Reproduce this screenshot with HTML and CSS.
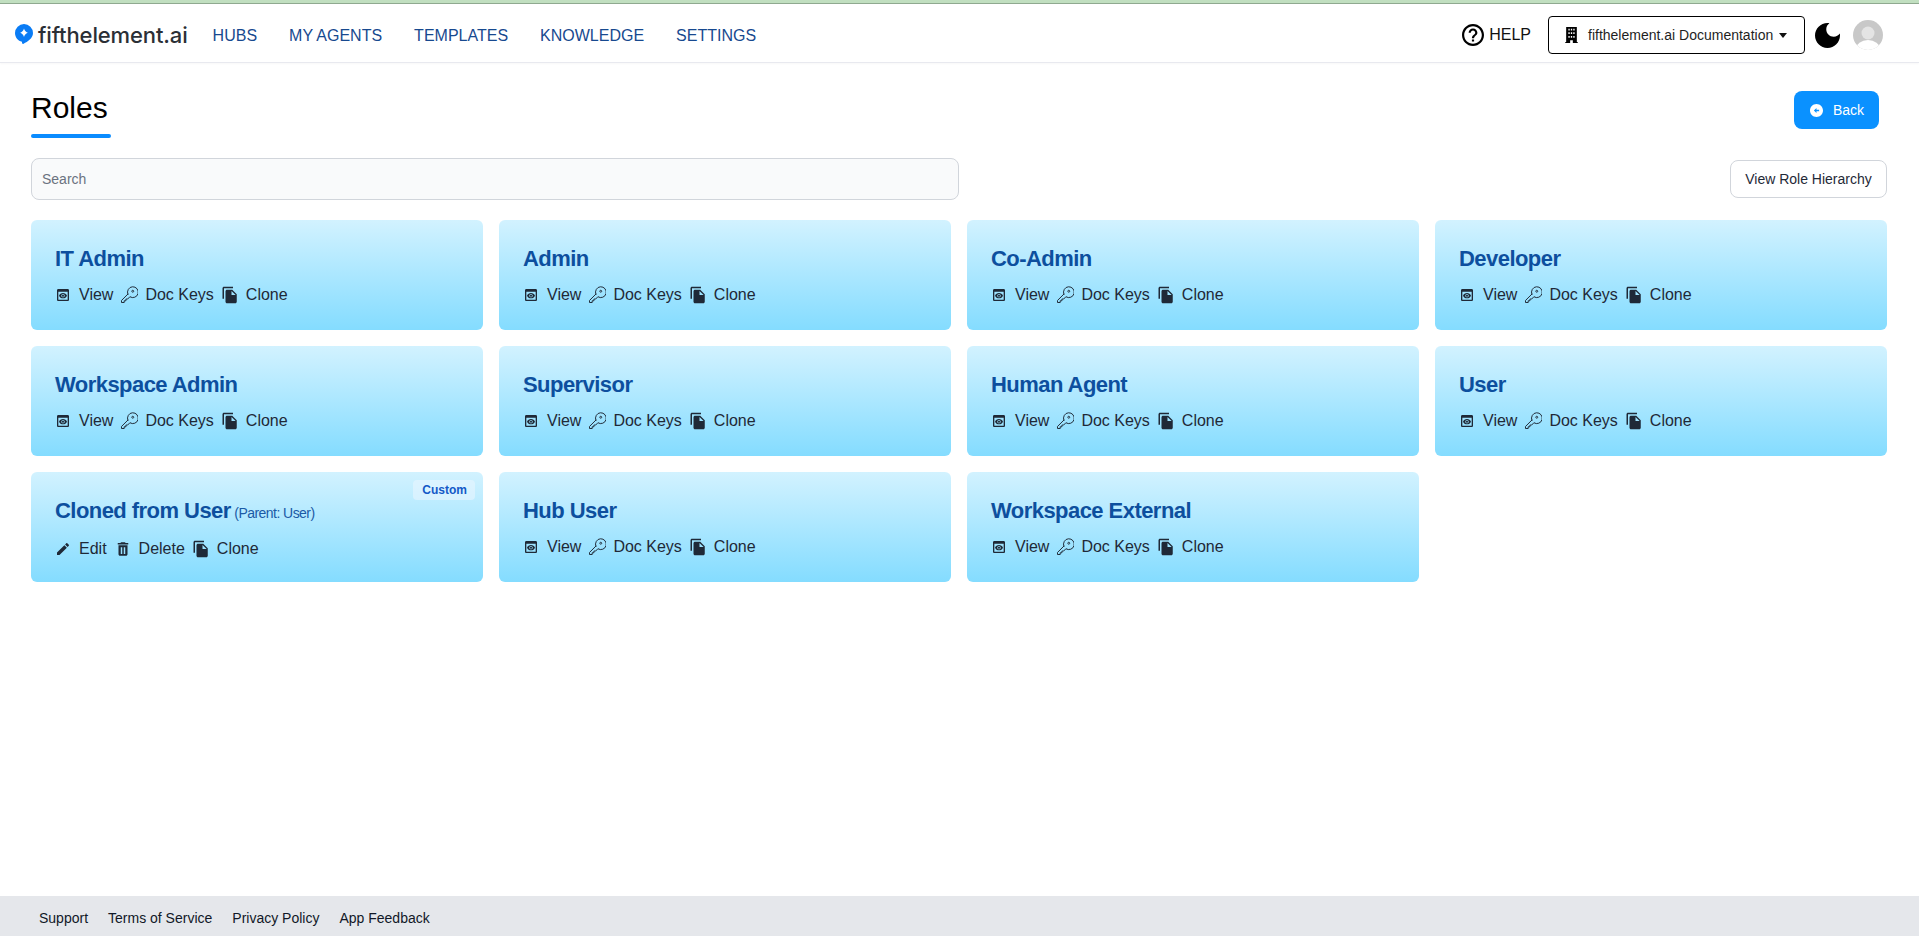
FILE: index.html
```html
<!DOCTYPE html>
<html lang="en">
<head>
<meta charset="utf-8">
<title>Roles</title>
<link rel="stylesheet" href="styles.css">
</head>
<body>
<svg class="sprite" aria-hidden="true">
  <symbol id="i-view" viewBox="0 0 24 24"><path d="M19 3H5c-1.11 0-2 .9-2 2v14c0 1.1.89 2 2 2h14c1.1 0 2-.9 2-2V5c0-1.1-.89-2-2-2zm0 16H5V7h14v12zm-5.5-6c0 .83-.67 1.5-1.5 1.5s-1.5-.67-1.5-1.5.67-1.5 1.5-1.5 1.5.67 1.5 1.5zM12 9c-2.73 0-5.06 1.66-6 4 .94 2.34 3.27 4 6 4s5.06-1.66 6-4c-.94-2.34-3.27-4-6-4zm0 6.5c-1.38 0-2.5-1.12-2.5-2.5s1.12-2.5 2.5-2.5 2.5 1.12 2.5 2.5-1.12 2.5-2.5 2.5z"/></symbol>
  <symbol id="i-key" viewBox="0 0 24 24"><path fill="none" stroke="currentColor" stroke-width="1.300" stroke-linejoin="round" stroke-linecap="round" d="M10.400 10.900 2 19.300V22h3.600v-2.300h2.300v-2.300h2.300l3-3.100a7.200 7.200 0 1 0-2.800-3.400z"/><circle cx="17" cy="7" r="1.300" fill="none" stroke="currentColor" stroke-width="1.200"/></symbol>
  <symbol id="i-copy" viewBox="0 0 24 24"><path d="M16 1H4c-1.1 0-2 .9-2 2v14h2V3h12V1zm-1 4l6 6v10c0 1.1-.9 2-2 2H7.99C6.89 23 6 22.1 6 21l.01-14c0-1.1.89-2 1.99-2h7zm-1 7h5.500L14 6.500V12z"/></symbol>
  <symbol id="i-edit" viewBox="0 0 24 24"><path d="M3 17.250V21h3.750L17.810 9.940l-3.750-3.750L3 17.250zM20.710 7.040c.39-.39.39-1.020 0-1.410l-2.340-2.340c-.39-.39-1.020-.39-1.410 0l-1.830 1.830 3.750 3.750 1.830-1.830z"/></symbol>
  <symbol id="i-trash" viewBox="0 0 24 24"><path fill-rule="evenodd" d="M6 19c0 1.100.9 2 2 2h8c1.100 0 2-.9 2-2V7H6v12zM9 9.500h2v9H9zM13 9.500h2v9h-2zM19 4h-3.500l-1-1h-5l-1 1H5v2h14V4z"/></symbol>
</svg>

<div class="topline"></div>
<header class="topbar">
  <a class="brand" href="#">
    <svg class="brand-mark" viewBox="0 0 18 20"><path fill="#0a7cf5" d="M9 0a9 9 0 0 0-9 9c0 4.300 3 7.900 7 8.800v1.300c0 .8 1 1.100 1.600.6C12.700 17.600 18 14.300 18 9a9 9 0 0 0-9-9z"/><path fill="#fff" d="M9 4.500c.7 2.300 1.500 3.200 3.800 4.300-2.300 1-3.100 2-3.800 4.300-.7-2.300-1.500-3.300-3.800-4.300C7.500 7.700 8.300 6.800 9 4.500z"/></svg>
    <span class="brand-name">fifthelement.ai</span>
  </a>
  <nav class="mainnav">
    <a href="#">HUBS</a>
    <a href="#">MY AGENTS</a>
    <a href="#">TEMPLATES</a>
    <a href="#">KNOWLEDGE</a>
    <a href="#">SETTINGS</a>
  </nav>
  <div class="topbar-right">
    <a class="help" href="#">
      <svg class="help-icon" viewBox="2 2 20 20"><path d="M11 18h2v-2h-2v2zm1-16C6.480 2 2 6.480 2 12s4.480 10 10 10 10-4.480 10-10S17.520 2 12 2zm0 18c-4.410 0-8-3.590-8-8s3.590-8 8-8 8 3.590 8 8-3.590 8-8 8zm0-14c-2.210 0-4 1.790-4 4h2c0-1.100.9-2 2-2s2 .9 2 2c0 2-3 1.750-3 5h2c0-2.250 3-2.500 3-5 0-2.210-1.790-4-4-4z"/></svg>
      <span>HELP</span>
    </a>
    <button class="org" type="button">
      <svg class="org-icon" viewBox="0 0 14 18"><path fill-rule="evenodd" d="M1 0h12v17h1v1H8.500v-3h-3v3H0v-1h1zM3.500 2v2H5V2zM6.250 2v2h1.500V2zM9 2v2h1.500V2zM3.500 6v2H5V6zM6.250 6v2h1.500V6zM9 6v2h1.500V6zM3.500 10v2H5v-2zM6.250 10v2h1.500v-2zM9 10v2h1.500v-2z"/></svg>
      <span>fifthelement.ai Documentation</span>
      <i class="caret"></i>
    </button>
    <svg class="moon" viewBox="3 3 18 18"><path d="M12 3c-4.970 0-9 4.030-9 9s4.030 9 9 9 9-4.030 9-9c0-.46-.04-.92-.1-1.360-.98 1.370-2.580 2.260-4.400 2.260-2.980 0-5.400-2.420-5.400-5.400 0-1.810.89-3.420 2.260-4.400-.44-.06-.9-.1-1.360-.1z"/></svg>
    <svg class="avatar" viewBox="0 0 30 30"><defs><clipPath id="avatar-clip"><circle cx="15" cy="15" r="15"/></clipPath></defs><g clip-path="url(#avatar-clip)"><rect width="30" height="30" fill="#c8c8c8"/><circle cx="15" cy="13" r="6.500" fill="#e4e4e4"/><ellipse cx="15" cy="29" rx="12" ry="9" fill="#fff"/></g></svg>
  </div>
</header>

<main class="page">
  <div class="page-head">
    <div class="title-block">
      <h1>Roles</h1>
      <div class="title-rule"></div>
    </div>
    <button class="btn-back" type="button">
      <svg viewBox="2 2 20 20"><path d="M2 12c0 5.520 4.480 10 10 10s10-4.480 10-10S17.520 2 12 2 2 6.480 2 12zm10-1h4v2h-4v3l-4-4 4-4v3z"/></svg>
      <span>Back</span>
    </button>
  </div>

  <div class="toolbar">
    <input class="search" type="text" placeholder="Search">
    <button class="btn-outline" type="button">View Role Hierarchy</button>
  </div>

  <section class="role-grid">
    <article class="role"><h2>IT Admin</h2><div class="actions"><a href="#"><svg><use href="#i-view"/></svg>View</a><a href="#"><svg class="key"><use href="#i-key"/></svg>Doc Keys</a><a href="#"><svg class="copy"><use href="#i-copy"/></svg>Clone</a></div></article>
    <article class="role"><h2>Admin</h2><div class="actions"><a href="#"><svg><use href="#i-view"/></svg>View</a><a href="#"><svg class="key"><use href="#i-key"/></svg>Doc Keys</a><a href="#"><svg class="copy"><use href="#i-copy"/></svg>Clone</a></div></article>
    <article class="role"><h2>Co-Admin</h2><div class="actions"><a href="#"><svg><use href="#i-view"/></svg>View</a><a href="#"><svg class="key"><use href="#i-key"/></svg>Doc Keys</a><a href="#"><svg class="copy"><use href="#i-copy"/></svg>Clone</a></div></article>
    <article class="role"><h2>Developer</h2><div class="actions"><a href="#"><svg><use href="#i-view"/></svg>View</a><a href="#"><svg class="key"><use href="#i-key"/></svg>Doc Keys</a><a href="#"><svg class="copy"><use href="#i-copy"/></svg>Clone</a></div></article>
    <article class="role"><h2>Workspace Admin</h2><div class="actions"><a href="#"><svg><use href="#i-view"/></svg>View</a><a href="#"><svg class="key"><use href="#i-key"/></svg>Doc Keys</a><a href="#"><svg class="copy"><use href="#i-copy"/></svg>Clone</a></div></article>
    <article class="role"><h2>Supervisor</h2><div class="actions"><a href="#"><svg><use href="#i-view"/></svg>View</a><a href="#"><svg class="key"><use href="#i-key"/></svg>Doc Keys</a><a href="#"><svg class="copy"><use href="#i-copy"/></svg>Clone</a></div></article>
    <article class="role"><h2>Human Agent</h2><div class="actions"><a href="#"><svg><use href="#i-view"/></svg>View</a><a href="#"><svg class="key"><use href="#i-key"/></svg>Doc Keys</a><a href="#"><svg class="copy"><use href="#i-copy"/></svg>Clone</a></div></article>
    <article class="role"><h2>User</h2><div class="actions"><a href="#"><svg><use href="#i-view"/></svg>View</a><a href="#"><svg class="key"><use href="#i-key"/></svg>Doc Keys</a><a href="#"><svg class="copy"><use href="#i-copy"/></svg>Clone</a></div></article>
    <article class="role"><span class="badge">Custom</span><h2>Cloned from User <small>(Parent: User)</small></h2><div class="actions"><a href="#"><svg><use href="#i-edit"/></svg>Edit</a><a href="#"><svg class="trash"><use href="#i-trash"/></svg>Delete</a><a href="#"><svg class="copy"><use href="#i-copy"/></svg>Clone</a></div></article>
    <article class="role"><h2>Hub User</h2><div class="actions"><a href="#"><svg><use href="#i-view"/></svg>View</a><a href="#"><svg class="key"><use href="#i-key"/></svg>Doc Keys</a><a href="#"><svg class="copy"><use href="#i-copy"/></svg>Clone</a></div></article>
    <article class="role"><h2>Workspace External</h2><div class="actions"><a href="#"><svg><use href="#i-view"/></svg>View</a><a href="#"><svg class="key"><use href="#i-key"/></svg>Doc Keys</a><a href="#"><svg class="copy"><use href="#i-copy"/></svg>Clone</a></div></article>
  </section>
</main>

<footer class="footer">
  <a href="#">Support</a>
  <a href="#">Terms of Service</a>
  <a href="#">Privacy Policy</a>
  <a href="#">App Feedback</a>
</footer>
</body>
</html>
```

FILE: styles.css
```css
* { box-sizing: border-box; }
html, body { height: 100%; }
body {
  margin: 0;
  display: flex;
  flex-direction: column;
  min-height: 100vh;
  overflow: hidden;
  background: #fff;
  color: #1f2937;
  font-family: "Liberation Sans", Arial, sans-serif;
}
a { color: inherit; text-decoration: none; }
button { font-family: inherit; cursor: pointer; }
.sprite { display: none; }

.topline { height: 4px; flex: none; background: #c1dfc0; border-bottom: 1px solid #8fa98f; }

.topbar {
  flex: none;
  height: 59px;
  display: flex;
  align-items: center;
  padding: 4px 36px 0 15px;
  background: #fff;
  border-bottom: 1px solid #e8e9ef;
  box-shadow: 0 1px 2px rgba(0, 0, 0, .03);
}
.brand { display: flex; align-items: center; gap: 5px; }
.brand-mark { width: 18px; height: 20px; margin-bottom: 2px; }
.brand-name { font-family: Inter, sans-serif; font-size: 22px; font-weight: 500; letter-spacing: -.13px; color: #2b2f36; }
.mainnav { display: flex; gap: 32px; margin-left: 25px; padding-top: 2px; font-size: 16px; color: #17498f; }
.topbar-right { margin-left: auto; display: flex; align-items: center; }
.help { display: flex; align-items: center; gap: 5px; font-size: 16px; color: #111; margin-right: 17px; }
.help-icon { width: 22px; height: 22px; }
.org {
  width: 257px;
  height: 38px;
  display: flex;
  align-items: center;
  padding: 0 14px 0 16px;
  background: #fff;
  color: #1f1f1f;
  border: 1px solid #000;
  border-radius: 4px;
  font-size: 14px;
}
.org-icon { width: 13px; height: 16px; margin-right: 10px; }
.caret { margin-left: 6px; border: 4.500px solid transparent; border-top: 5px solid #111; border-bottom: 0; }
.moon { width: 25px; height: 25px; margin-left: 10px; }
.avatar { width: 30px; height: 30px; margin-left: 13px; }

.page { flex: 1; padding: 25px 32px 0 31px; }
.page-head { display: flex; justify-content: space-between; align-items: flex-start; padding-right: 8px; }
.title-block { width: 80px; }
h1 { margin: 0; font-size: 30px; font-weight: 400; line-height: 40px; color: #000; }
.title-rule { height: 4px; margin-top: 6px; background: #0a8cff; border-radius: 2px; }
.btn-back {
  display: flex;
  align-items: center;
  gap: 10px;
  height: 38px;
  margin-top: 3px;
  padding: 0 15px 0 16px;
  background: #0a91ff;
  color: #fff;
  border: 0;
  border-radius: 8px;
  font-size: 14px;
}
.btn-back svg { width: 13px; height: 13px; fill: #fff; }

.toolbar { display: flex; justify-content: space-between; align-items: center; margin-top: 20px; }
.search {
  width: 928px;
  height: 42px;
  padding: 0 10px;
  background: #f9fafb;
  border: 1px solid #d1d5db;
  border-radius: 8px;
  font: 14px "Liberation Sans", Arial, sans-serif;
  color: #1f2937;
}
.search::placeholder { color: #6b7280; opacity: 1; }
.btn-outline {
  width: 157px;
  height: 38px;
  background: #fff;
  color: #1f2937;
  border: 1px solid #d1d5db;
  border-radius: 8px;
  font-size: 14px;
}

.role-grid { display: grid; grid-template-columns: repeat(4, 1fr); gap: 16px; margin-top: 20px; }
.role {
  position: relative;
  height: 110px;
  padding: 26px 24px 0;
  background: linear-gradient(to bottom, #d2f2ff, #84dcff);
  border-radius: 6px;
}
.role h2 {
  margin: 0;
  font-size: 22px;
  line-height: 26px;
  font-weight: 700;
  letter-spacing: -.55px;
  color: #0d4f9e;
}
.role small { margin-left: -2px; font-size: 14px; font-weight: 400; letter-spacing: -.55px; color: #1b5aa6; }
.actions { display: flex; gap: 8px; margin-top: 11px; font-size: 16px; line-height: 24px; color: #1f2937; }
.actions a { display: flex; align-items: center; gap: 8px; }
.actions svg { width: 16px; height: 16px; fill: #1f2937; color: #1f2937; }
.actions .copy { width: 18px; height: 18px; margin: 0 -1px; }
.actions .key { width: 18px; height: 18px; margin: 0 -1px; }
.actions .trash { width: 18px; height: 18px; margin: 0 -1px; }
.badge {
  position: absolute;
  top: 8px;
  right: 8px;
  padding: 3px 8px 3px 9px;
  font-size: 12px;
  line-height: 14px;
  font-weight: 700;
  color: #1459c7;
  background: rgba(235, 245, 255, .55);
  border-radius: 4px;
}

.footer {
  flex: none;
  height: 40px;
  display: flex;
  align-items: center;
  gap: 20px;
  padding: 4px 0 0 39px;
  background: #e5e7eb;
  color: #111827;
  font-size: 14px;
}
```
